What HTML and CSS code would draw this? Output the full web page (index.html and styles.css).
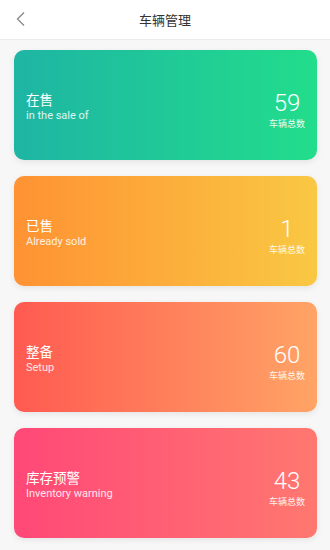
FILE: index.html
```html
<!DOCTYPE html>
<html lang="zh">
<head>
<meta charset="utf-8">
<link rel="stylesheet" href="styles.css">
</head>
<body>
<header class="nav">
  <span class="back"><svg width="12" height="16" viewBox="0 0 12 16"><path d="M9 1.5 L2.5 8 L9 14.5" fill="none" stroke="#888" stroke-width="1.3"/></svg></span>
  <h1 class="title">车辆管理</h1>
</header>
<main class="list">
  <div class="card c1">
    <div class="left"><div class="cn">在售</div><div class="en">in the sale of</div></div>
    <div class="right"><div class="num">59</div><div class="lbl">车辆总数</div></div>
  </div>
  <div class="card c2">
    <div class="left"><div class="cn">已售</div><div class="en">Already sold</div></div>
    <div class="right"><div class="num">1</div><div class="lbl">车辆总数</div></div>
  </div>
  <div class="card c3">
    <div class="left"><div class="cn">整备</div><div class="en">Setup</div></div>
    <div class="right"><div class="num">60</div><div class="lbl">车辆总数</div></div>
  </div>
  <div class="card c4">
    <div class="left"><div class="cn">库存预警</div><div class="en">Inventory warning</div></div>
    <div class="right"><div class="num">43</div><div class="lbl">车辆总数</div></div>
  </div>
</main>
</body>
</html>
```
FILE: styles.css
```css
* { box-sizing: border-box; }
html, body { margin: 0; padding: 0; }
body {
  background: #f7f7f7;
  font-family: Roboto, "Noto Sans CJK SC", sans-serif;
  width: 330px;
  height: 550px;
  overflow: hidden;
}
.nav {
  position: relative;
  height: 40px;
  background: #fff;
  border-bottom: 1px solid #ececec;
  display: flex;
  align-items: center;
  justify-content: center;
}
.back {
  position: absolute;
  left: 15px;
  top: 11px;
  display: flex;
}
.title {
  margin: 0;
  font-size: 13px;
  font-weight: 400;
  color: #333;
}
.list {
  display: flex;
  flex-direction: column;
  gap: 16px;
  padding: 10px 13px 0 14px;
}
.card {
  height: 110px;
  border-radius: 10px;
  display: flex;
  align-items: center;
  justify-content: space-between;
  padding: 0 12px 0 12px;
  color: #fff;
  box-shadow: 0 2px 6px rgba(0,0,0,0.08);
}
.c1 { background: linear-gradient(90deg, #1eb5a4, #22dd8b); }
.c2 { background: linear-gradient(90deg, #ff9233, #f9c843); }
.c3 { background: linear-gradient(90deg, #ff5a51, #ffa466); }
.c4 { background: linear-gradient(90deg, #ff4877, #ff7870); }
.left { display: flex; flex-direction: column; margin-top: 4px; }
.cn { font-size: 13.5px; line-height: 18px; }
.en { font-size: 11px; line-height: 14px; opacity: 0.85; }
.right {
  display: flex;
  flex-direction: column;
  align-items: center;
  margin-top: 10px;
}
.num { font-size: 24px; line-height: 28px; font-weight: 300; }
.lbl { font-size: 9px; line-height: 14px; opacity: 0.9; }
```
